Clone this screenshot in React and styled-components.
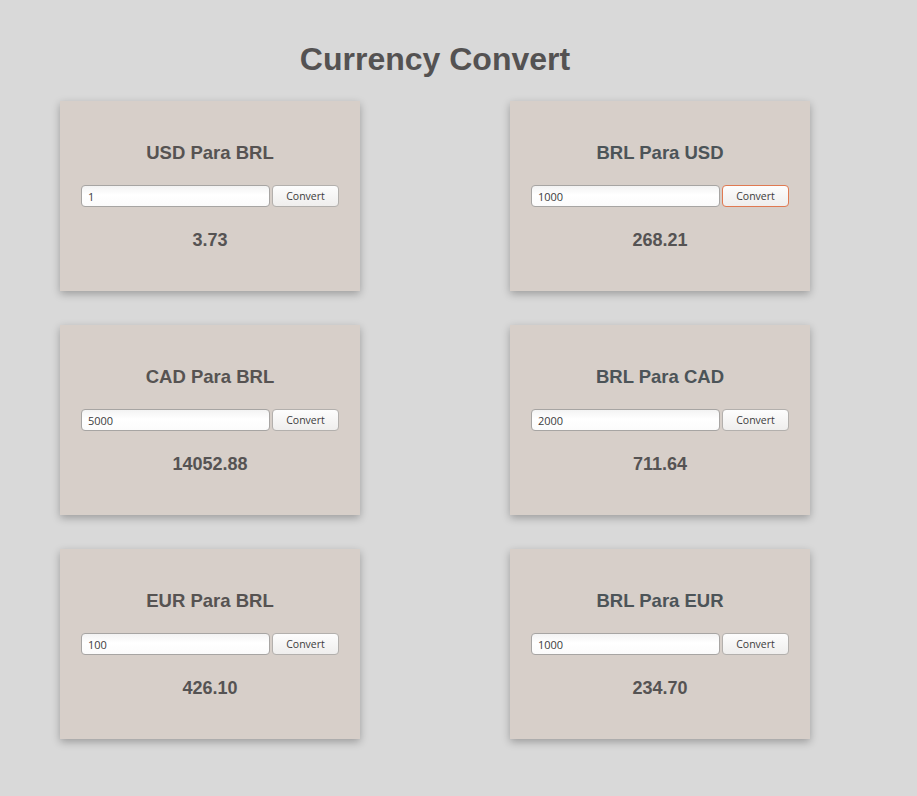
import React from "react";
import styled, { createGlobalStyle } from "styled-components";

const Global = createGlobalStyle`
  html, body { margin: 0; padding: 0; background: #d9d9d9; }
  body { font-family: "Liberation Sans", Arial, sans-serif; }
`;

const Page = styled.div`
  width: 870px;
  padding: 40px 0 57px;
  box-sizing: border-box;
`;

const Title = styled.h1`
  margin: 0 0 23px;
  text-align: center;
  font-family: "Liberation Sans", Arial, sans-serif;
  font-weight: 700;
  font-size: 32px;
  line-height: 38px;
  color: #545252;
`;

const Grid = styled.div`
  display: grid;
  grid-template-columns: 300px 300px;
  column-gap: 150px;
  row-gap: 34px;
  padding-left: 60px;
`;

const Card = styled.div`
  height: 190px;
  background: #d7cfc9;
  box-shadow: 0 3px 8px rgba(0, 0, 0, 0.28);
  display: flex;
  flex-direction: column;
  align-items: center;
  padding-top: 41px;
  box-sizing: border-box;
`;

const Heading = styled.h2`
  margin: 0;
  font-size: 18.5px;
  line-height: 22px;
  font-weight: 700;
  color: ${(p) => p.$tone};
`;

const Row = styled.div`
  display: flex;
  gap: 2px;
  margin-top: 21px;
  align-items: center;
`;

const Input = styled.input`
  width: 189px;
  height: 22px;
  box-sizing: border-box;
  border: 1px solid #a7a5a3;
  border-radius: 4px;
  background: linear-gradient(#f3f3f3, #ffffff 45%, #fbfbfb);
  padding: 0 6px;
  font-family: "Open Sans", "DejaVu Sans", sans-serif;
  font-size: 11px;
  color: #3c3c3c;
  outline: none;
`;

const Button = styled.button`
  width: 67px;
  height: 22px;
  box-sizing: border-box;
  border: 1px solid ${(p) => (p.$active ? "#e07a52" : "#b3b0ad")};
  border-radius: 4px;
  background: linear-gradient(#fdfdfd, #efeeed);
  font-family: "Open Sans", "DejaVu Sans", sans-serif;
  font-size: 10.5px;
  color: #3c3c3c;
  padding: 0;
  cursor: pointer;
`;

const Result = styled.div`
  margin-top: 22px;
  font-size: 18px;
  line-height: 22px;
  font-weight: 700;
  color: #555353;
`;

const cards = [
  { t: "USD Para BRL", v: "1", r: "3.73", tone: "#565352" },
  { t: "BRL Para USD", v: "1000", r: "268.21", tone: "#4c5458", active: true },
  { t: "CAD Para BRL", v: "5000", r: "14052.88", tone: "#565352" },
  { t: "BRL Para CAD", v: "2000", r: "711.64", tone: "#4c5458" },
  { t: "EUR Para BRL", v: "100", r: "426.10", tone: "#565352" },
  { t: "BRL Para EUR", v: "1000", r: "234.70", tone: "#4c5458" },
];

export default function App() {
  return (
    <>
      <Global />
      <Page>
        <Title>Currency Convert</Title>
        <Grid>
          {cards.map((c) => (
            <Card key={c.t}>
              <Heading $tone={c.tone}>{c.t}</Heading>
              <Row>
                <Input defaultValue={c.v} />
                <Button $active={c.active}>Convert</Button>
              </Row>
              <Result>{c.r}</Result>
            </Card>
          ))}
        </Grid>
      </Page>
    </>
  );
}
